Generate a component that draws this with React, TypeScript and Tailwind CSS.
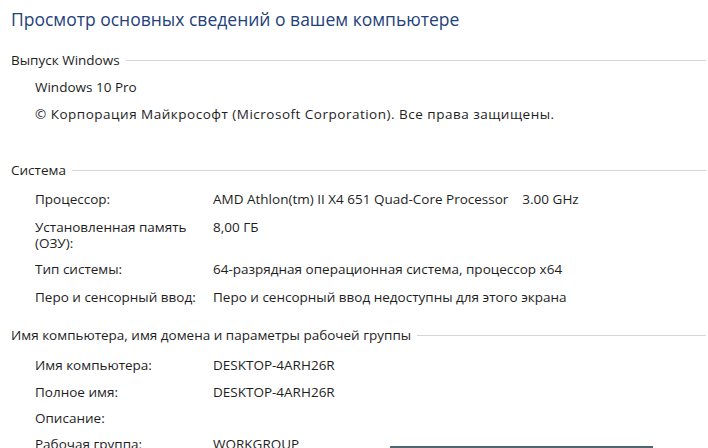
import React from "react";

const font = { fontFamily: '"Open Sans", "Noto Sans", sans-serif' };

function Header({ text, className }: { text: string; className?: string }) {
  return (
    <div className={"flex items-center h-[28px] pl-[11px] " + (className ?? "")}>
      <span className="text-[13.5px] text-[#1e1e1e] whitespace-nowrap">{text}</span>
      <div className="flex-1 h-px bg-[#d6d6d6] ml-[6px] mr-[2px]" />
    </div>
  );
}

function Row({
  label,
  value,
  h,
}: {
  label: React.ReactNode;
  value?: React.ReactNode;
  h: string;
}) {
  return (
    <div className={"flex items-center pl-[35px] text-[13.5px] text-[#1e1e1e] " + h}>
      <div className="w-[178px] whitespace-nowrap">{label}</div>
      <div className="whitespace-nowrap">{value}</div>
    </div>
  );
}

export default function App() {
  return (
    <div className="w-[708px] h-[448px] bg-white overflow-hidden" style={font}>
      <div className="h-[38px] flex items-center pl-[11px]">
        <span className="text-[17.5px] text-[#23417a]">
          Просмотр основных сведений о вашем компьютере
        </span>
      </div>
      <Header text="Выпуск Windows" className="mt-[8px]" />
      <div className="flex items-center h-[27px] pl-[35px] text-[13.5px] text-[#1e1e1e]">
        Windows 10 Pro
      </div>
      <div className="flex items-center h-[27px] pl-[35px] text-[13.5px] text-[#1e1e1e] tracking-[0.5px] whitespace-nowrap">
        © Корпорация Майкрософт (Microsoft Corporation). Все права защищены.
      </div>
      <Header text="Система" className="mt-[27px] h-[30px]" />
      <Row
        h="h-[28px]"
        label="Процессор:"
        value={
          <>
            AMD Athlon(tm) II X4 651 Quad-Core Processor
            <span className="ml-[14px]">3.00 GHz</span>
          </>
        }
      />
      <div className="flex h-[42px] pl-[35px] text-[13.5px] text-[#1e1e1e]">
        <div className="w-[178px] leading-[16px] pt-[6px]">
          Установленная память
          <br />
          (ОЗУ):
        </div>
        <div className="pt-[6px] leading-[16px]">8,00 ГБ</div>
      </div>
      <Row h="h-[28px]" label="Тип системы:" value="64-разрядная операционная система, процессор x64" />
      <Row h="h-[28px]" label="Перо и сенсорный ввод:" value="Перо и сенсорный ввод недоступны для этого экрана" />
      <Header text="Имя компьютера, имя домена и параметры рабочей группы" className="mt-[10px]" />
      <Row h="h-[28px] mt-[2px]" label="Имя компьютера:" value="DESKTOP-4ARH26R" />
      <Row h="h-[26px]" label="Полное имя:" value="DESKTOP-4ARH26R" />
      <Row h="h-[26px]" label="Описание:" />
      <div className="flex items-center h-[26px] pl-[35px] text-[13.5px] text-[#1e1e1e]">
        <div className="w-[178px]">Рабочая группа:</div>
        <div className="w-[177px] whitespace-nowrap">WORKGROUP</div>
        <div className="w-[263px] h-[3px] bg-[#4f6670] self-start mt-[15px]" />
      </div>
    </div>
  );
}
